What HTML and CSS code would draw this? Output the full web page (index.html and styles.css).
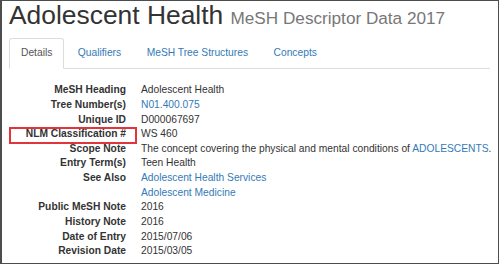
FILE: index.html
```html
<!DOCTYPE html>
<html lang="en">
<head>
    <meta charset="UTF-8">
    <title>Adolescent Health - MeSH Descriptor Data 2017</title>
    <link rel="stylesheet" href="styles.css">
</head>
<body>
    <div class="frame">
        <h1 class="title">Adolescent Health <small>MeSH Descriptor Data 2017</small></h1>

        <ul class="tabs">
            <li class="active"><a href="#">Details</a></li>
            <li><a href="#">Qualifiers</a></li>
            <li><a href="#">MeSH Tree Structures</a></li>
            <li><a href="#">Concepts</a></li>
        </ul>

        <!-- Details tab -->
        <dl class="details">
            <dt>MeSH Heading</dt>
            <dd>Adolescent Health</dd>
            <dt>Tree Number(s)</dt>
            <dd><a href="#">N01.400.075</a></dd>
            <dt>Unique ID</dt>
            <dd>D000067697</dd>
            <dt class="marked">NLM Classification #</dt>
            <dd>WS 460</dd>
            <dt>Scope Note</dt>
            <dd>The concept covering the physical and mental conditions of <a href="#">ADOLESCENTS</a>.</dd>
            <dt>Entry Term(s)</dt>
            <dd>Teen Health</dd>
            <dt>See Also</dt>
            <dd><a href="#">Adolescent Health Services</a><br><a href="#">Adolescent Medicine</a></dd>
            <dt>Public MeSH Note</dt>
            <dd>2016</dd>
            <dt>History Note</dt>
            <dd>2016</dd>
            <dt>Date of Entry</dt>
            <dd>2015/07/06</dd>
            <dt>Revision Date</dt>
            <dd>2015/03/05</dd>
        </dl>
    </div>
</body>
</html>
```

FILE: styles.css
```css
body {
    margin: 0;
    background-color: white;
    font-family: "Liberation Sans", Arial, sans-serif;
    font-size: 10.25px;
    line-height: 1.42857;
    color: #333;
}
.frame {
    width: 499px;
    height: 264px;
    box-sizing: border-box;
    border: 1px solid #4d4d4d;
    border-left-width: 2px;
    padding: 0 8px 0 7px;
    overflow: hidden;
}
a {
    color: #337ab7;
    text-decoration: none;
}
.title {
    margin: 0;
    font-size: 26.4px;
    font-weight: normal;
    line-height: 1.1;
    color: #333;
}
.title small {
    font-size: 65%;
    color: #777;
}
/* Abas */
.tabs {
    list-style: none;
    margin: 8px 0 0 0;
    padding: 0;
    display: flex;
    border-bottom: 1px solid #ddd;
}
.tabs li {
    margin-right: 1.5px;
    margin-bottom: -1px;
}
.tabs a {
    display: block;
    padding: 7.3px 11px;
    border: 1px solid transparent;
    border-radius: 3px 3px 0 0;
}
.tabs .active a {
    color: #555;
    background-color: white;
    border-color: #ddd #ddd transparent;
}
/* Lista de detalhes */
.details {
    display: grid;
    grid-template-columns: 117px 1fr;
    column-gap: 15px;
    margin: 14px 0 0 0;
}
.details dt {
    font-weight: bold;
    text-align: right;
    white-space: nowrap;
    position: relative;
}
.details dd {
    margin: 0;
    white-space: nowrap;
}
/* Caixa vermelha em volta do rótulo */
.marked::after {
    content: "";
    position: absolute;
    top: 0;
    bottom: -2px;
    left: 0;
    right: -11px;
    border: 2px solid #e0353b;
}
```
